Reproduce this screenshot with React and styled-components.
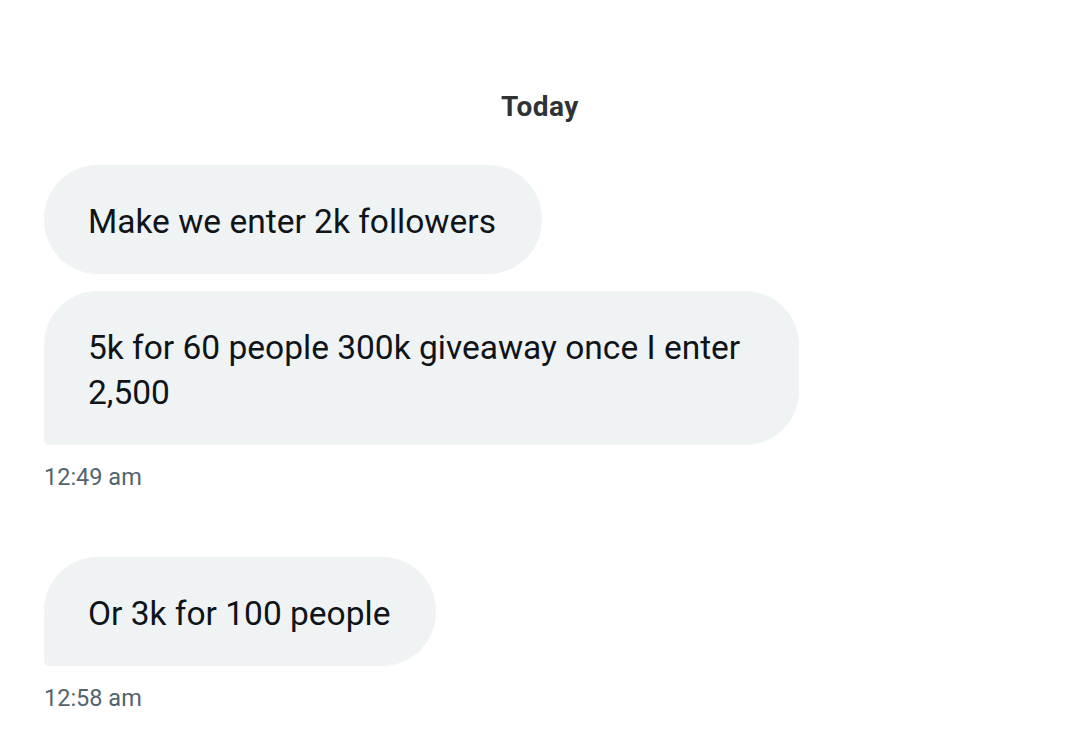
import React from 'react';
import styled, { createGlobalStyle } from 'styled-components';

const GlobalStyle = createGlobalStyle`
  html, body {
    margin: 0;
    padding: 0;
    background: #ffffff;
  }
  body {
    font-family: Roboto, "Liberation Sans", sans-serif;
    color: #0f1419;
  }
`;

const Thread = styled.div`
  width: 1080px;
  height: 732px;
  box-sizing: border-box;
  padding: 88px 44px 0;
  overflow: hidden;
  display: flex;
  flex-direction: column;
`;

const DayLabel = styled.div`
  text-align: center;
  font-size: 28px;
  line-height: 38px;
  font-weight: 700;
  letter-spacing: 0.5px;
  color: #2f3336;
  margin-bottom: 39px;
`;

const Group = styled.div`
  display: flex;
  flex-direction: column;
  align-items: flex-start;
  gap: 17px;
  margin-bottom: ${p => p.$space || 0}px;
`;

const Bubble = styled.div`
  max-width: 755px;
  box-sizing: border-box;
  padding: 34px 46px 30px 44px;
  background: #eff3f4;
  font-size: 33.5px;
  line-height: 45px;
  color: #0f1419;
  border-radius: ${p => (p.$tail ? '54px 54px 54px 5px' : '54px')};
`;

const Stamp = styled.div`
  font-size: 23.5px;
  line-height: 30px;
  color: #536471;
`;

const groups = [
  {
    messages: ['Make we enter 2k followers', '5k for 60 people 300k giveaway once I enter 2,500'],
    time: '12:49 am',
    space: 65,
  },
  {
    messages: ['Or 3k for 100 people'],
    time: '12:58 am',
    space: 0,
  },
];

export default function App() {
  return (
    <>
      <GlobalStyle />
      <Thread>
        <DayLabel>Today</DayLabel>
        {groups.map((g, i) => (
          <Group key={i} $space={g.space}>
            {g.messages.map((m, j) => (
              <Bubble key={j} $tail={j === g.messages.length - 1}>
                {m}
              </Bubble>
            ))}
            <Stamp>{g.time}</Stamp>
          </Group>
        ))}
      </Thread>
    </>
  );
}
